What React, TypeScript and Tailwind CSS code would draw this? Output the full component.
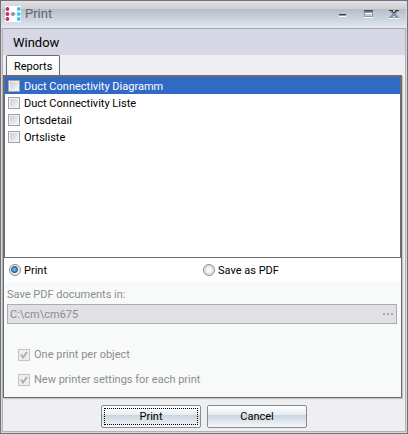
import { useState } from "react";

const reports = ["Duct Connectivity Diagramm", "Duct Connectivity Liste", "Ortsdetail", "Ortsliste"];

const boxClass =
  "size-3 shrink-0 appearance-none border border-[#9da1a6] bg-linear-to-br from-[#c4c9cf] to-[#fbfbfb] shadow-[inset_0_0_0_1px_#f4f4f4] checked:from-[#7f9fc0]";

const buttonClass =
  "h-[23px] w-[100px] rounded-xs border border-[#858b96] bg-[linear-gradient(#fff,#e6ebf1_45%,#cad5df_45%,#f5f7f9)] p-[2px]";

function Logo() {
  return (
    <svg width="16" height="16" viewBox="0 0 16 16" className="shrink-0">
      <rect width="16" height="16" fill="#fff" />
      <path d="M5 8h6" stroke="#c5c5c5" strokeWidth="1" />
      {[3, 8, 13].map((y) => (
        <g key={y}>
          <circle cx="2.4" cy={y} r="1.9" fill="#c92a63" />
          <circle cx="13.8" cy={y} r="1.9" fill="#35c5f1" />
        </g>
      ))}
      <circle cx="8" cy="8" r="1.9" fill="#8f8f8f" />
    </svg>
  );
}

function TitleBar() {
  return (
    <header className="flex h-7 items-center border-b border-[#a4a9b3] bg-[linear-gradient(#e3e3e6,#cfd0d2_8px,#b5bdc7_8px,#e3e8f1)] pr-[7px] pb-px pl-[3px]">
      <Logo />
      <h1 className="ml-1 flex-1 text-[13px] leading-[18px] text-[#63666c]">Print</h1>
      <div className="flex gap-[13px]">
        <button aria-label="Minimize" className="h-3 w-3">
          <svg width="12" height="12" shapeRendering="crispEdges">
            <path d="M2 6h7v1H2z" fill="#3e4046" />
            <path d="M2 7h7v1H2z" fill="#8b9db5" />
            <path d="M2 8h7v1H2z" fill="#fff" />
          </svg>
        </button>
        <button aria-label="Maximize" className="h-3 w-3">
          <svg width="12" height="12" shapeRendering="crispEdges">
            <path d="M2 2h9v1H2z" fill="#4a4a4e" />
            <path d="M2 3h9v6H2z" fill="#8297b0" />
            <path d="M2 3h9v1H2z" fill="#687484" />
            <path d="M3 5h7v3H3z" fill="#c5ccd6" />
            <path d="M3 5h7v1H3zM2 9h9v1H2z" fill="#fff" />
          </svg>
        </button>
        <button aria-label="Close" className="h-3 w-3">
          <svg width="12" height="12" shapeRendering="crispEdges">
            <path d="M2 10h4v1H2zM8 10h4v1H8zM3 8h1v1H3zM10 8h1v1h-1z" fill="#fff" />
            <path d="M3 3h3v1H3zM8 3h3v1H8zM4 4h6v1H4zM5 5h4v2H5zM4 7h6v1H4zM3 8h3v1H3zM8 8h3v1H8zM2 9h4v1H2zM8 9h4v1H8z" fill="#7f93ac" />
            <path d="M2 2h4v1H2zM8 2h4v1H8zM5 3h1v1H5zM8 3h1v1H8zM6 4h2v1H6z" fill="#3e4046" />
          </svg>
        </button>
      </div>
    </header>
  );
}

function ReportList() {
  const [selected, setSelected] = useState(0);

  return (
    <ul className="flex-1 border border-t-2 border-[#6c6c6c] bg-white">
      {reports.map((report, i) => (
        <li key={report} onClick={() => setSelected(i)} className={i === selected ? "bg-[#316ac5] text-white" : ""}>
          <label className="flex h-[17px] items-center gap-1 pt-px pl-[3px]">
            <input type="checkbox" className={boxClass} />
            {report}
          </label>
        </li>
      ))}
    </ul>
  );
}

function OutputRadio({ label, checked, onSelect }: { label: string; checked: boolean; onSelect: () => void }) {
  return (
    <label className="flex flex-1 items-center gap-[3px]">
      <input
        type="radio"
        name="output"
        checked={checked}
        onChange={onSelect}
        className="size-3 appearance-none rounded-full border border-[#858d96] bg-[radial-gradient(#f8f8f8_2px,#cbd1d8_5px)] shadow-[inset_0_0_0_1px_#e8eaee] checked:bg-[radial-gradient(circle_at_45%_45%,#8fd0ee,#1c6596_3px,#e9edf1_4px)]"
      />
      {label}
    </label>
  );
}

function DisabledOption({ label }: { label: string }) {
  return (
    <label className="flex items-center gap-1">
      <span className="grid size-3">
        <input
          type="checkbox"
          defaultChecked
          disabled
          className="col-start-1 row-start-1 size-3 appearance-none border border-[#c3c3c3] bg-[#eeeeee]"
        />
        <svg viewBox="0 0 12 12" className="pointer-events-none col-start-1 row-start-1 size-3">
          <path d="M3 5.5 5 8.5 9 3" fill="none" stroke="#b0b0b0" strokeWidth="2" />
        </svg>
      </span>
      {label}
    </label>
  );
}

export default function App() {
  const [output, setOutput] = useState("print");

  return (
    <div className="flex min-h-screen flex-col border border-[#6f737b] bg-[#d9d9dc] px-px pb-px font-[Roboto,'Noto_Sans',sans-serif] text-[11px] leading-[17px] text-black">
      <TitleBar />
      <div className="flex flex-1 flex-col border-x border-b border-[#b2b2b6] bg-[#efeff2]">
        <nav className="flex h-[26px] items-center bg-[#d8d7e5] px-[10px] text-[13px]">
          <button>Window</button>
        </nav>
        <div role="tablist" className="flex h-5 items-end pl-[3px]">
          <button
            role="tab"
            aria-selected="true"
            className="h-5 rounded-t-xs border border-b-0 border-[#6c6c6c] bg-linear-to-b from-white to-[#f5f7f7] px-[7px] pt-px"
          >
            Reports
          </button>
        </div>

        <main className="mr-[3px] flex flex-1 flex-col border-r border-b border-l border-[#6c6c6c] bg-[#f7faf9] shadow-[1px_1px_1px_#c4c4c4]">
          <ReportList />
          <div className="flex h-6 items-center bg-white pr-1 pl-[5px]">
            <OutputRadio label="Print" checked={output === "print"} onSelect={() => setOutput("print")} />
            <OutputRadio label="Save as PDF" checked={output === "pdf"} onSelect={() => setOutput("pdf")} />
          </div>
          <div className="flex flex-col pt-1 pr-1 pb-[9px] pl-[3px] text-[#8d8d8d]">
            <label htmlFor="folder">Save PDF documents in:</label>
            <div className="mt-px flex h-5 items-center border border-[#a5afb8] bg-[#e1e0e5]">
              <input id="folder" disabled defaultValue={"C:\\cm\\cm675"} className="min-w-0 flex-1 px-[2px]" />
              <button disabled aria-label="Browse" className="px-[3px]">
                <svg width="10" height="2" shapeRendering="crispEdges" fill="#a5a5aa">
                  <path d="M0 0h2v2H0zM4 0h2v2H4zM8 0h2v2H8z" />
                </svg>
              </button>
            </div>
            <div className="mt-[22px] flex flex-col gap-2 pl-[11px]">
              <DisabledOption label="One print per object" />
              <DisabledOption label="New printer settings for each print" />
            </div>
          </div>
        </main>

        <footer className="flex justify-center gap-[6px] pt-[7px] pb-[3px]">
          <button className={buttonClass}>
            <span className="flex h-full items-center justify-center border border-dotted border-black">Print</span>
          </button>
          <button className={buttonClass}>Cancel</button>
        </footer>
      </div>
    </div>
  );
}
